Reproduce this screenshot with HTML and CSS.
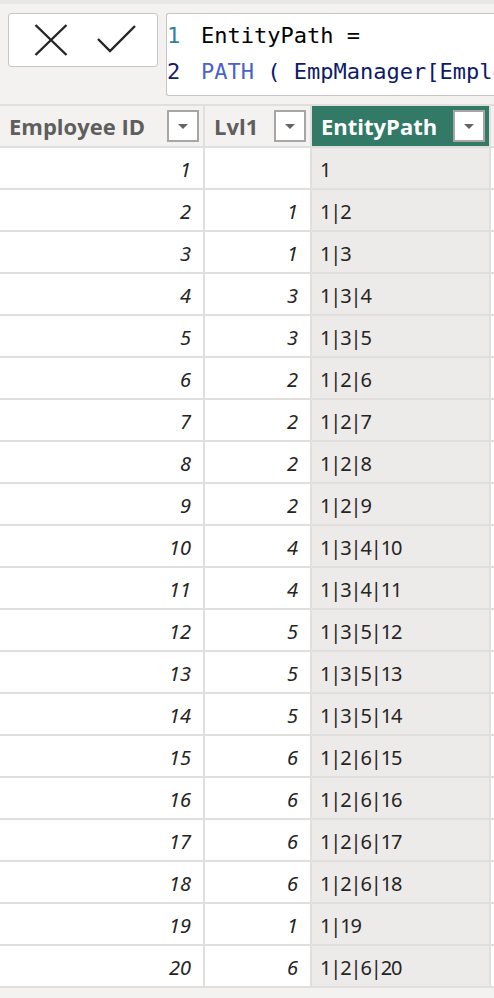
FILE: index.html
```html
<!DOCTYPE html>
<html>
<head>
<meta charset="utf-8">
<link rel="stylesheet" href="styles.css">
</head>
<body>
<div class="topstrip"></div>
<div class="formula-bar">
  <div class="actions">
    <svg class="icon" width="34" height="32" viewBox="0 0 34 32"><path d="M1.5 1 L32.5 31 M32.5 1 L1.5 31" stroke="#252423" stroke-width="2.4" fill="none"/></svg>
    <svg class="icon" width="40" height="30" viewBox="0 0 40 30"><path d="M1 14 L13 26 L38 1" stroke="#252423" stroke-width="2.4" fill="none"/></svg>
  </div>
  <div class="editor">
    <div class="line"><span class="ln ln1">1</span><span class="code">EntityPath =</span></div>
    <div class="line"><span class="ln ln2">2</span><span class="code"><span class="fn">PATH</span> ( EmpManager[Employee ID], EmpManager[Manager ID] )</span></div>
  </div>
</div>
<div class="grid">
  <div class="hd">Employee ID<span class="filter"></span></div>
  <div class="hd">Lvl1<span class="filter"></span></div>
  <div class="hd sel">EntityPath<span class="filter"></span></div>
  <div class="edge hdedge"></div>

  <div class="c num">1</div><div class="c num"></div><div class="c path">1</div><div class="edge"></div>
  <div class="c num">2</div><div class="c num">1</div><div class="c path">1|2</div><div class="edge"></div>
  <div class="c num">3</div><div class="c num">1</div><div class="c path">1|3</div><div class="edge"></div>
  <div class="c num">4</div><div class="c num">3</div><div class="c path">1|3|4</div><div class="edge"></div>
  <div class="c num">5</div><div class="c num">3</div><div class="c path">1|3|5</div><div class="edge"></div>
  <div class="c num">6</div><div class="c num">2</div><div class="c path">1|2|6</div><div class="edge"></div>
  <div class="c num">7</div><div class="c num">2</div><div class="c path">1|2|7</div><div class="edge"></div>
  <div class="c num">8</div><div class="c num">2</div><div class="c path">1|2|8</div><div class="edge"></div>
  <div class="c num">9</div><div class="c num">2</div><div class="c path">1|2|9</div><div class="edge"></div>
  <div class="c num">10</div><div class="c num">4</div><div class="c path">1|3|4|10</div><div class="edge"></div>
  <div class="c num">11</div><div class="c num">4</div><div class="c path">1|3|4|11</div><div class="edge"></div>
  <div class="c num">12</div><div class="c num">5</div><div class="c path">1|3|5|12</div><div class="edge"></div>
  <div class="c num">13</div><div class="c num">5</div><div class="c path">1|3|5|13</div><div class="edge"></div>
  <div class="c num">14</div><div class="c num">5</div><div class="c path">1|3|5|14</div><div class="edge"></div>
  <div class="c num">15</div><div class="c num">6</div><div class="c path">1|2|6|15</div><div class="edge"></div>
  <div class="c num">16</div><div class="c num">6</div><div class="c path">1|2|6|16</div><div class="edge"></div>
  <div class="c num">17</div><div class="c num">6</div><div class="c path">1|2|6|17</div><div class="edge"></div>
  <div class="c num">18</div><div class="c num">6</div><div class="c path">1|2|6|18</div><div class="edge"></div>
  <div class="c num">19</div><div class="c num">1</div><div class="c path">1|19</div><div class="edge"></div>
  <div class="c num">20</div><div class="c num">6</div><div class="c path">1|2|6|20</div><div class="edge"></div>
</div>
</body>
</html>
```
FILE: styles.css
```css
html, body {
  margin: 0;
  padding: 0;
  background: #f3f2f1;
  width: 494px;
  height: 998px;
  overflow: hidden;
}
.topstrip {
  height: 4px;
  background: #e8e7e6;
}
.formula-bar {
  display: flex;
  align-items: flex-start;
  padding: 9px 0 0 8px;
  gap: 8px;
  height: 91px;
  box-sizing: border-box;
}
.actions {
  width: 150px;
  height: 54px;
  box-sizing: border-box;
  background: #fff;
  border: 1px solid #c8c6c4;
  border-radius: 3px;
  display: flex;
  align-items: center;
  padding-left: 25px;
  gap: 29px;
  flex-shrink: 0;
}
.actions .icon { display: block; }
.editor {
  flex: 1;
  height: 83px;
  box-sizing: border-box;
  background: #fff;
  border: 1px solid #c8c6c4;
  border-right: none;
  border-radius: 3px 0 0 3px;
  padding-top: 4px;
  overflow: hidden;
  white-space: nowrap;
  font-family: "DejaVu Sans Mono", monospace;
  font-size: 22px;
  line-height: 36px;
}
.line { display: flex; }
.ln {
  width: 34px;
  flex-shrink: 0;
}
.ln1 { color: #2f7f9e; }
.ln2 { color: #141a6b; }
.code { color: #000; }
.line:nth-child(2) .code { color: #0d1a6a; }
.fn { color: #4a63c9; }

.grid {
  margin-top: 9px;
  display: grid;
  grid-template-columns: 203px 105px 177px 3px;
  grid-auto-rows: 40px;
  column-gap: 2px;
  row-gap: 2px;
  background: #e1dfdd;
  border-top: 2px solid #e1dfdd;
  border-bottom: 2px solid #e1dfdd;
  font-family: "Noto Sans", "Open Sans", sans-serif;
}
.hd {
  background: #f3f2f1;
  color: #605e5c;
  font-family: "Open Sans", "Noto Sans", sans-serif;
  font-weight: 700;
  font-size: 22px;
  display: flex;
  align-items: center;
  justify-content: space-between;
  padding: 0 4px 0 9px;
  box-sizing: border-box;
  white-space: nowrap;
}
.hd.sel {
  background: #327966;
  color: #fff;
}
.filter {
  width: 32px;
  height: 32px;
  box-sizing: border-box;
  border: 2px solid #a8a6a4;
  background: #fff;
  display: flex;
  align-items: center;
  justify-content: center;
  flex-shrink: 0;
}
.filter::after {
  content: "";
  width: 0;
  height: 0;
  border-left: 5px solid transparent;
  border-right: 5px solid transparent;
  border-top: 5px solid #666462;
}
.c {
  background: #fff;
  color: #252423;
  font-size: 20px;
  line-height: 36px;
  padding-top: 4px;
  box-sizing: border-box;
}
.num {
  text-align: right;
  font-style: italic;
  padding-right: 12px;
}
.path {
  background: #edebe9;
  padding-left: 8px;
  letter-spacing: -1.1px;
}
.edge { background: #fff; }
.hdedge { background: #f3f2f1; }
```
